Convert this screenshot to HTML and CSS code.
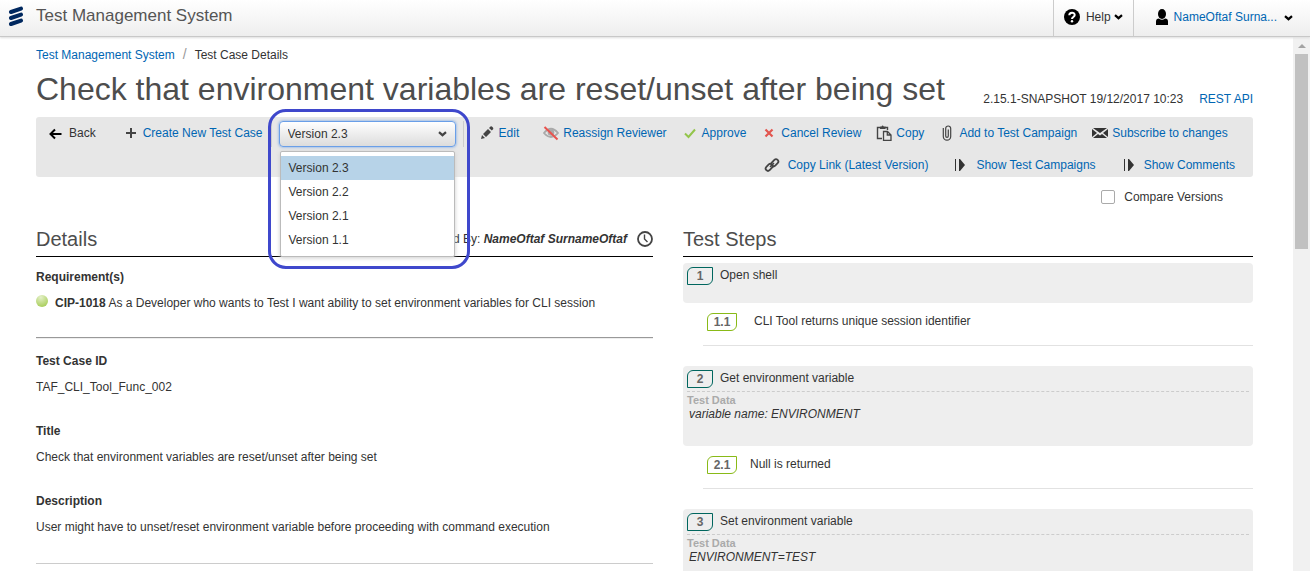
FILE: index.html
```html
<!DOCTYPE html>
<html lang="en">
<head>
<meta charset="utf-8">
<title>Test Management System</title>
<link rel="stylesheet" href="styles.css">
</head>
<body>
<header class="topbar">
  <svg class="logo" viewBox="0 0 16 20" aria-hidden="true"><g stroke="#00285f" stroke-width="4" stroke-linecap="round"><path d="M3 6 13 2.600M3 12 13 8.600M3 18 13 14.600"/></g></svg>
  <span class="product">Test Management System</span>
  <button class="top-item help" type="button">
    <svg class="icon" viewBox="0 0 16 16"><circle cx="8" cy="8" r="8"/><path d="M5.300 6.200C5.300 2.700 10.800 2.900 10.700 6c0 2-2.700 2-2.700 4" fill="none" stroke="#fff" stroke-width="2"/><circle cx="8" cy="12.300" r="1.200" fill="#fff"/></svg>
    <span>Help</span>
    <svg class="chevron" viewBox="0 0 9 6"><path d="M1 1.200 4.500 4.200 8 1.200" fill="none" stroke="#000" stroke-width="2.200"/></svg>
  </button>
  <button class="top-item user" type="button">
    <svg class="icon" viewBox="0 0 16 16"><ellipse cx="8" cy="5" rx="4" ry="5"/><path d="M2 16v-3.500Q2 9.500 5 9.500q3 2.500 6 0 3 0 3 3V16z"/></svg>
    <span>NameOftaf Surna...</span>
    <svg class="chevron" viewBox="0 0 9 6"><path d="M1 1.200 4.500 4.200 8 1.200" fill="none" stroke="#000" stroke-width="2.200"/></svg>
  </button>
</header>
<div class="viewport">
<main class="page">
  <nav class="breadcrumb" aria-label="Breadcrumb"><a href="#">Test Management System</a><span class="slash">/</span><span>Test Case Details</span></nav>
  <div class="title-row">
    <h1>Check that environment variables are reset/unset after being set</h1>
    <p class="build"><span>2.15.1-SNAPSHOT 19/12/2017 10:23</span><a href="#">REST API</a></p>
  </div>
  <section class="toolbar">
    <div class="tools">
      <a class="tool back" href="#"><svg class="icon" viewBox="0 0 16 16"><path d="M12.500 9H1.500M6 4.500 1.500 9 6 13.500" fill="none" stroke="#000" stroke-width="2"/></svg>Back</a>
      <a class="tool" href="#"><svg class="icon" viewBox="0 0 16 16"><path d="M8 3v10M3 8h10" stroke="#444" stroke-width="2"/></svg>Create New Test Case</a>
      <div class="version">
        <select class="version-select" aria-label="Version"><option>Version 2.3</option><option>Version 2.2</option><option>Version 2.1</option><option>Version 1.1</option></select>
        <svg class="select-arrow" viewBox="0 0 9 6"><path d="M1 1.200 4.500 4.200 8 1.200" fill="none" stroke="#444" stroke-width="2.200"/></svg>
        <ul class="menu"><li class="current">Version 2.3</li><li>Version 2.2</li><li>Version 2.1</li><li>Version 1.1</li></ul>
        <div class="highlight"></div>
      </div>
      <a class="tool edit" href="#"><svg class="icon" viewBox="0 0 16 16"><path d="M2 14l1-4 3 3zM4 9l5-5 3 3-5 5zM10 3l1.500-1.500q1-.5 2 .5t.8 2L12.800 5.500z" fill="#444"/></svg>Edit</a>
      <a class="tool" href="#"><svg class="icon" viewBox="0 0 16 16"><path d="M1 8Q8-.5 15 8 8 16 1 8z" fill="none" stroke="#aaa" stroke-width="1.800"/><circle cx="8" cy="7.500" r="3.300" fill="#aaa"/><path d="M1.500 2 14.500 14.500" stroke="#e8534e" stroke-width="2"/></svg>Reassign Reviewer</a>
      <a class="tool" href="#"><svg class="icon" viewBox="0 0 16 16"><path d="M3 8.500 6.500 12 13 4.500" fill="none" stroke="#93c54b" stroke-width="2"/></svg>Approve</a>
      <a class="tool" href="#"><svg class="icon" viewBox="0 0 16 16"><path d="M4.500 4.500 11.500 11.500M11.500 4.500 4.500 11.500" stroke="#e2564f" stroke-width="2.200"/></svg>Cancel Review</a>
      <a class="tool" href="#"><svg class="icon" viewBox="0 0 16 16"><path d="M6 13.500H1.500v-11H4M9 2.500h2.500V5" fill="none" stroke="#444" stroke-width="1.400"/><path d="M4 4V1.500h1.500Q6.500-.5 7.800 1.500H9.500V4z" fill="#444"/><path d="M7.500 6.500h4l3.500 3.500v5.300H7.500zM11.300 6.500V10H15" fill="none" stroke="#444" stroke-width="1.300"/></svg>Copy</a>
      <a class="tool" href="#"><svg class="icon" viewBox="0 0 16 16"><path d="M4.300 3v8.500a3.700 3.700 0 0 0 7.400 0V3.500a2.500 2.500 0 0 0-5 0V11a1.300 1.300 0 0 0 2.600 0V4.500" fill="none" stroke="#444" stroke-width="1.200"/></svg>Add to Test Campaign</a>
      <a class="tool" href="#"><svg class="icon" viewBox="0 0 16 16"><path d="M1 3h14L8 8zM0 4l5 4-5 4zM16 4l-5 4 5 4zM1 13l5-4L8 10.500l2-1.500L15 13z" fill="#333"/></svg>Subscribe to changes</a>
    </div>
    <div class="tools second">
      <a class="tool" href="#"><svg class="icon" viewBox="0 0 16 16"><g fill="none" stroke="#444" stroke-width="1.800"><rect x="6.800" y="3.500" width="8" height="4.600" rx="2.300" transform="rotate(-45 10.800 5.800)"/><rect x="1.200" y="8" width="8" height="4.600" rx="2.300" transform="rotate(-45 5.200 10.300)"/></g><path d="M6 10l4-4" stroke="#444" stroke-width="1.500"/></svg>Copy Link (Latest Version)</a>
      <a class="tool" href="#"><svg class="icon" viewBox="0 0 16 16"><path d="M3 2h1v12H3zM7 2h1l5 6-5 6H7z" fill="#333"/></svg>Show Test Campaigns</a>
      <a class="tool" href="#"><svg class="icon" viewBox="0 0 16 16"><path d="M4 2h1v12H4zM8 2h1l5 6-5 6H8z" fill="#333"/></svg>Show Comments</a>
    </div>
  </section>
  <div class="compare"><input type="checkbox" id="compare"><label for="compare">Compare Versions</label></div>
  <div class="columns">
    <section class="details">
      <div class="section-head"><h2>Details</h2><span class="author">Created By: <b>NameOftaf SurnameOftaf</b></span>
        <svg class="icon" viewBox="0 0 16 16"><circle cx="8" cy="8" r="7" fill="none" stroke="#444" stroke-width="1.800"/><path d="M7.500 3.500V8l3 3" fill="none" stroke="#444" stroke-width="1.400"/></svg></div>
      <dl class="fields">
        <dt>Requirement(s)</dt>
        <dd class="requirement"><span class="dot"></span><span><b>CIP-1018</b> As a Developer who wants to Test I want ability to set environment variables for CLI session</span></dd>
      </dl>
      <hr class="rule">
      <dl class="fields">
        <dt>Test Case ID</dt><dd>TAF_CLI_Tool_Func_002</dd>
        <dt>Title</dt><dd>Check that environment variables are reset/unset after being set</dd>
        <dt>Description</dt><dd>User might have to unset/reset environment variable before proceeding with command execution</dd>
      </dl>
      <hr class="rule light">
    </section>
    <section class="steps">
      <div class="section-head"><h2>Test Steps</h2></div>
      <article class="step"><div class="step-title"><span class="badge">1</span>Open shell</div></article>
      <div class="result"><span class="badge green">1.1</span><span class="wide">CLI Tool returns unique session identifier</span></div>
      <article class="step"><div class="step-title"><span class="badge">2</span>Get environment variable</div>
        <div class="data"><h3>Test Data</h3><p>variable name: ENVIRONMENT</p></div></article>
      <div class="result"><span class="badge green">2.1</span><span>Null is returned</span></div>
      <article class="step"><div class="step-title"><span class="badge">3</span>Set environment variable</div>
        <div class="data"><h3>Test Data</h3><p>ENVIRONMENT=TEST</p></div></article>
    </section>
  </div>
</main>
<div class="scrollbar" aria-hidden="true"><span class="scroll-up"></span><span class="thumb"></span></div>
</div>
</body>
</html>
```
FILE: styles.css
```css
* { box-sizing: border-box; }
body {
  margin: 0;
  height: 100vh;
  display: flex;
  flex-direction: column;
  overflow: hidden;
  background: #fff;
  color: #333;
  font: 12px/16px "Liberation Sans", Arial, sans-serif;
}
a { color: #0066b3; text-decoration: none; }
h1, h2, h3, p, dl, dd, ul { margin: 0; padding: 0; }
.icon { width: 16px; height: 16px; flex: none; }
.chevron { width: 9px; height: 6px; flex: none; }

.topbar {
  flex: none;
  display: flex;
  align-items: stretch;
  height: 37px;
  padding-left: 8px;
  border-bottom: 1px solid #c8c8c8;
  background: linear-gradient(#fff, #eee);
  box-shadow: 0 1px 2px #ddd;
  z-index: 1;
}
.logo { width: 16px; height: 20px; margin: 6px 12px 0 0; }
.product { flex: 1; font-size: 17px; line-height: 32px; color: #555; }
.top-item {
  display: flex;
  align-items: center;
  border: 0;
  border-left: 1px solid #ccc;
  background: none;
  font: inherit;
  color: #333;
  padding: 0 10px 2px;
}
.help .icon { margin-right: 6px; }
.help .chevron { margin-left: 3px; }
.user { padding-left: 20px; padding-right: 17px; color: #0066b3; }
.user .icon { margin-right: 4px; }
.user .chevron { margin-left: 7px; margin-top: 2px; }

.viewport { flex: 1; min-height: 0; display: flex; }
.page { flex: 1; min-width: 0; overflow: hidden; padding: 9px 40px 0 36px; }
.scrollbar {
  flex: none;
  width: 17px;
  padding: 7px 2px 0;
  background: #f1f1f1;
  display: flex;
  flex-direction: column;
  align-items: center;
}
.scroll-up { border: 4px solid transparent; border-top: 0; border-bottom-color: #a3a3a3; margin-bottom: 6px; }
.thumb { width: 100%; height: 37%; background: #c1c1c1; }

.slash { margin: 0 8px; color: #999; font-size: 14px; }
.title-row { display: flex; justify-content: space-between; align-items: flex-end; margin: 8px 0 10px; }
h1 { font-size: 32px; line-height: 36px; font-weight: normal; color: #4d4d4d; }
.build { display: flex; gap: 16px; }

.toolbar {
  display: flex;
  flex-direction: column;
  gap: 4px;
  background: #e7e7e7;
  border-radius: 3px;
}
.tools { display: flex; align-items: center; gap: 15px; height: 32px; padding-left: 13px; white-space: nowrap; }
.tool { display: flex; align-items: center; gap: 4px; }
.back { color: #333; margin-right: 12px; }
.edit { margin-right: 9px; }
.second { justify-content: flex-end; gap: 24px; height: 24px; padding-right: 18px; }
.second .tool { gap: 8px; }

.version {
  position: relative;
  display: flex;
  padding: 0 7px;
  margin: 2px 0 0 -7px;
  border: solid #ccc;
  border-width: 0 1px;
}
.version-select {
  appearance: none;
  width: 177px;
  height: 26px;
  padding: 0 8px;
  border: 1px solid #6a9fe8;
  border-radius: 4px;
  background: linear-gradient(#fff, #dcdcdc);
  box-shadow: 0 0 3px #6a9fe8;
  color: #333;
  font: inherit;
}
.select-arrow { position: absolute; right: 16px; top: 10px; width: 9px; height: 6px; pointer-events: none; }
.menu {
  position: absolute;
  z-index: 2;
  top: 30px;
  left: 8px;
  right: 8px;
  padding: 4px 0;
  border: 1px solid #bbb;
  border-radius: 2px;
  background: #fff;
  box-shadow: 0 1px 4px #ccc;
  list-style: none;
}
.menu li { padding: 0 8px; line-height: 24px; }
.menu .current { background: #b7d3e8; }
.highlight {
  position: absolute;
  z-index: 3;
  top: -12px;
  bottom: -122px;
  left: -4px;
  right: -7px;
  border: 3px solid #3f48cc;
  border-radius: 18px;
  pointer-events: none;
}

.compare { display: flex; justify-content: flex-end; align-items: center; height: 40px; padding-right: 30px; }
.compare input {
  appearance: none;
  width: 14px;
  height: 14px;
  margin: 0 9px 0 0;
  border: 1px solid #aaa;
  border-radius: 2px;
  background: #fff;
}
.columns { display: grid; grid-template-columns: 617fr 570fr; gap: 30px; }
.section-head {
  display: flex;
  align-items: center;
  padding: 10px 0 5px;
  border-bottom: 1px solid #000;
}
h2 { flex: 1; font-size: 20px; line-height: 24px; font-weight: normal; color: #4d4d4d; }
.author { margin-right: 10px; }
.author b { font-style: italic; }
.fields dt { margin-top: 28px; font-weight: bold; }
.fields dt:first-child { margin-top: 12px; }
.fields dd { margin-top: 10px; }
.requirement { display: flex; gap: 7px; }
.dot { width: 12px; height: 12px; border-radius: 50%; background: radial-gradient(circle at 40% 20%, #e4f0c8, #a9ce5c 80%); }
.rule { margin: 26px 0 14px; border: 0; border-top: 1px solid #999; border-bottom: 1px solid #eee; }
.light { margin-top: 28px; border-top-color: #ccc; border-bottom: 0; }

.step { min-height: 40px; padding: 4px; margin-top: 20px; border-radius: 4px; background: #eee; }
.section-head + .step { margin-top: 6px; }
.step-title { display: flex; gap: 7px; }
.badge {
  flex: none;
  width: 26px;
  height: 18px;
  border: 1px solid #00665e;
  border-radius: 6px 0;
  color: #666;
  font-weight: bold;
  text-align: center;
}
.green { width: 30px; border-color: #89ba17; }
.data { min-height: 51px; margin-top: 3px; border-top: 1px dashed #ccc; }
.data h3 { font-size: 11px; line-height: 16px; color: #aaa; }
.data p { padding-left: 2px; line-height: 12px; font-style: italic; }
.result { display: flex; gap: 13px; height: 43px; margin-left: 20px; padding: 10px 4px 0; border-bottom: 1px solid #e2e2e2; }
.wide { padding-left: 4px; }
```
